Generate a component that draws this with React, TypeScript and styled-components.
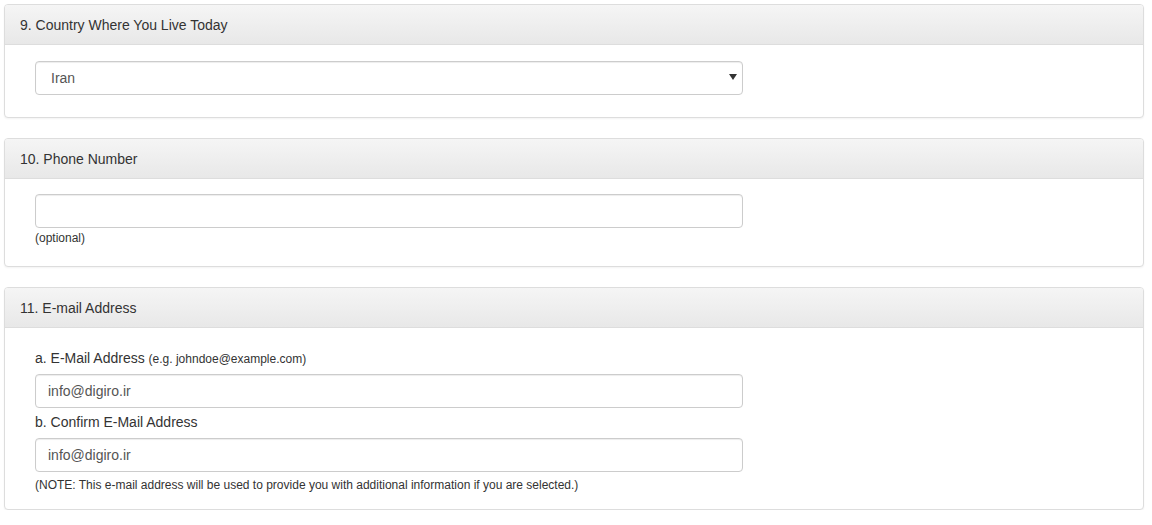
import React from 'react';
import styled, { createGlobalStyle } from 'styled-components';

const GlobalStyle = createGlobalStyle`
    html, body {
        margin: 0;
        padding: 0;
        background: #fff;
    }
    body {
        font-family: "Liberation Sans", Arial, Helvetica, sans-serif;
        font-size: 14px;
        line-height: 1.42857;
        color: #333;
    }
`;

const Page = styled.div`
    padding: 4px 8px 0 4px;
    display: flex;
    flex-direction: column;
    gap: 20px;
`;

const Panel = styled.section`
    border: 1px solid #ddd;
    border-radius: 4px;
    background: #fff;
    box-shadow: 0 1px 2px rgba(0, 0, 0, 0.05);
`;

const PanelHeading = styled.div`
    padding: 10px 15px 9px;
    border-bottom: 1px solid #ddd;
    border-radius: 3px 3px 0 0;
    background: linear-gradient(to bottom, #f5f5f5 0%, #e8e8e8 100%);
    color: #333;
    font-size: 14px;
    line-height: 20px;
`;

const PanelBody = styled.div<{ $top?: number; $bottom: number }>`
    padding: ${(p) => p.$top ?? 16}px 30px ${(p) => p.$bottom}px;
`;

const Field = styled.div`
    width: 708px;
    display: flex;
    flex-direction: column;
`;

const Label = styled.label<{ $below?: number }>`
    display: block;
    margin: 4px 0 ${(p) => p.$below ?? 5}px;
    font-size: 14px;
    line-height: 20px;
    font-weight: normal;
    color: #333;

    & small {
        font-size: 12px;
    }
`;

const TextInput = styled.input`
    box-sizing: border-box;
    width: 100%;
    height: 34px;
    padding: 6px 12px;
    border: 1px solid #ccc;
    border-radius: 4px;
    background: #fff;
    box-shadow: inset 0 1px 1px rgba(0, 0, 0, 0.075);
    font-family: inherit;
    font-size: 14px;
    color: #555;
    outline: none;
`;

const SelectWrap = styled.div`
    position: relative;
`;

const Select = styled.select`
    box-sizing: border-box;
    width: 100%;
    height: 34px;
    padding: 6px 12px 6px 15px;
    border: 1px solid #ccc;
    border-radius: 4px;
    background: #fff;
    box-shadow: inset 0 1px 1px rgba(0, 0, 0, 0.075);
    font-family: inherit;
    font-size: 14px;
    color: #555;
    appearance: none;
    outline: none;
`;

const Caret = styled.svg`
    position: absolute;
    right: 6px;
    top: 13px;
    pointer-events: none;
`;

const HelpText = styled.p<{ $top: number }>`
    margin: ${(p) => p.$top}px 0 0;
    font-size: 12px;
    line-height: 17px;
    color: #333;
`;

const App: React.FC = () => (
    <>
        <GlobalStyle />
        <Page>
            <Panel>
                <PanelHeading>9. Country Where You Live Today</PanelHeading>
                <PanelBody $bottom={22}>
                    <Field>
                        <SelectWrap>
                            <Select defaultValue="IR">
                                <option value="IR">Iran</option>
                            </Select>
                            <Caret width="8" height="6" viewBox="0 0 8 6">
                                <path d="M0 0h8L4 6z" fill="#333" />
                            </Caret>
                        </SelectWrap>
                    </Field>
                </PanelBody>
            </Panel>

            <Panel>
                <PanelHeading>10. Phone Number</PanelHeading>
                <PanelBody $top={15} $bottom={19}>
                    <Field>
                        <TextInput type="text" />
                        <HelpText $top={2}>(optional)</HelpText>
                    </Field>
                </PanelBody>
            </Panel>

            <Panel>
                <PanelHeading>11. E-mail Address</PanelHeading>
                <PanelBody $bottom={15}>
                    <Field>
                        <Label>
                            a. E-Mail Address <small>(e.g. johndoe@example.com)</small>
                        </Label>
                        <TextInput type="text" defaultValue="info@digiro.ir" />
                        <Label $below={6}>b. Confirm E-Mail Address</Label>
                        <TextInput type="text" defaultValue="info@digiro.ir" />
                        <HelpText $top={5}>
                            (NOTE: This e-mail address will be used to provide you with additional information if
                            you are selected.)
                        </HelpText>
                    </Field>
                </PanelBody>
            </Panel>
        </Page>
    </>
);

export default App;
